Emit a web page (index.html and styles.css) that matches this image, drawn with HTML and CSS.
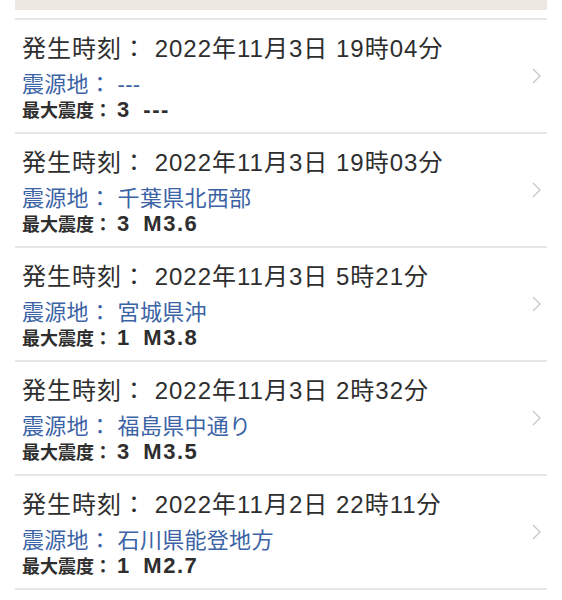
FILE: index.html
```html
<!DOCTYPE html>
<html lang="ja">
<head>
    <meta charset="UTF-8">
    <meta name="viewport" content="width=device-width, initial-scale=1.0">
    <title>地震情報</title>
    <link rel="stylesheet" href="styles.css">
</head>
<body>
    <main class="quake-list">
        <div class="banner"></div>
        <ul class="items">
            <li class="item">
                <div class="info">
                    <div class="time">発生時刻： 2022年11月3日 19時04分</div>
                    <div class="place">震源地： ---</div>
                    <div class="scale"><span class="label">最大震度：</span><span class="value">3 ---</span></div>
                </div>
                <svg class="chevron" viewBox="0 0 10 16"><polyline points="1,1 8,8 1,15"/></svg>
            </li>
            <li class="item">
                <div class="info">
                    <div class="time">発生時刻： 2022年11月3日 19時03分</div>
                    <div class="place">震源地： 千葉県北西部</div>
                    <div class="scale"><span class="label">最大震度：</span><span class="value">3 M3.6</span></div>
                </div>
                <svg class="chevron" viewBox="0 0 10 16"><polyline points="1,1 8,8 1,15"/></svg>
            </li>
            <li class="item">
                <div class="info">
                    <div class="time">発生時刻： 2022年11月3日 5時21分</div>
                    <div class="place">震源地： 宮城県沖</div>
                    <div class="scale"><span class="label">最大震度：</span><span class="value">1 M3.8</span></div>
                </div>
                <svg class="chevron" viewBox="0 0 10 16"><polyline points="1,1 8,8 1,15"/></svg>
            </li>
            <li class="item">
                <div class="info">
                    <div class="time">発生時刻： 2022年11月3日 2時32分</div>
                    <div class="place">震源地： 福島県中通り</div>
                    <div class="scale"><span class="label">最大震度：</span><span class="value">3 M3.5</span></div>
                </div>
                <svg class="chevron" viewBox="0 0 10 16"><polyline points="1,1 8,8 1,15"/></svg>
            </li>
            <li class="item">
                <div class="info">
                    <div class="time">発生時刻： 2022年11月2日 22時11分</div>
                    <div class="place">震源地： 石川県能登地方</div>
                    <div class="scale"><span class="label">最大震度：</span><span class="value">1 M2.7</span></div>
                </div>
                <svg class="chevron" viewBox="0 0 10 16"><polyline points="1,1 8,8 1,15"/></svg>
            </li>
        </ul>
    </main>
</body>
</html>
```

FILE: styles.css
```css
*{
    margin: 0;
    padding: 0;
    box-sizing: border-box;
}
body{
    background-color: #fff;
    font-family: "Liberation Sans", "Noto Sans CJK JP", sans-serif;
    color: #2e2e2e;
}
.quake-list{
    padding: 0 15px;
}
.banner{
    height: 10px;
    background-color: #ece7e0;
}
.items{
    list-style: none;
    margin-top: 8px;
    border-top: 2px solid #e6e6e6;
}
.item{
    height: 114px;
    display: flex;
    align-items: center;
    justify-content: space-between;
    padding: 0 5px 0 7px;
    border-bottom: 2px solid #e6e6e6;
}
.info{
    align-self: flex-start;
    padding-top: 14px;
}
.time{
    font-size: 24px;
    line-height: 30px;
    letter-spacing: 1px;
}
.place{
    margin-top: 6px;
    font-size: 22px;
    line-height: 30px;
    letter-spacing: 0.3px;
    color: #3b63a5;
}
.scale{
    line-height: 20px;
    font-weight: 700;
}
.scale .label{
    font-size: 18px;
}
.scale .value{
    margin-left: 5px;
    font-size: 22px;
    letter-spacing: 1.5px;
    word-spacing: 5px;
}
.chevron{
    width: 10px;
    height: 16px;
    fill: none;
    stroke: #c4c4c4;
    stroke-width: 1.2;
}
```
